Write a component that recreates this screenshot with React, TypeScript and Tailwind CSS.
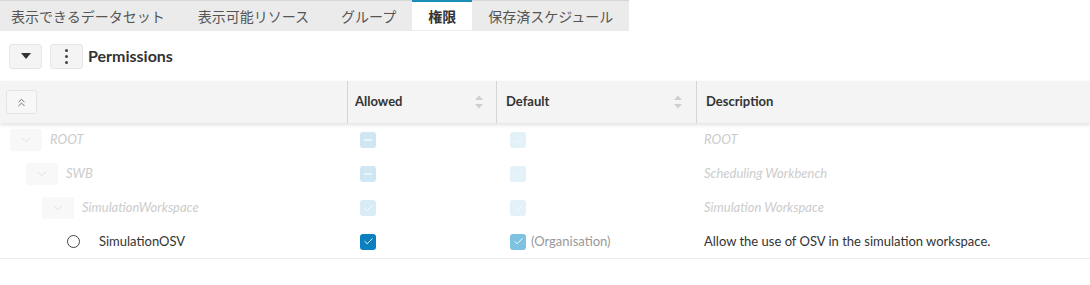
import { ChevronDown, ChevronsUp, Check, Minus } from "lucide-react";

const font = { fontFamily: '"Lato", "Noto Sans CJK JP", sans-serif' };

const tabs = ["表示できるデータセット", "表示可能リソース", "グループ", "権限", "保存済スケジュール"];

function SortArrows() {
  return (
    <svg width="10" height="16" viewBox="0 0 10 16" className="ml-auto">
      <path d="M1 6 L5 1.5 L9 6 Z" fill="#cfcfcf" />
      <path d="M1 10 L5 14.5 L9 10 Z" fill="#cfcfcf" />
    </svg>
  );
}

type BoxKind = "ind-faint" | "chk-faint" | "chk-fainter" | "chk-on" | "chk-mid";

function Box({ kind }: { kind: BoxKind }) {
  const bg = {
    "ind-faint": "bg-[#cfe6f3]",
    "chk-faint": "bg-[#d9ecf6]",
    "chk-fainter": "bg-[#e3f1f8]",
    "chk-on": "bg-[#0b80bf]",
    "chk-mid": "bg-[#7ec2e1]",
  }[kind];
  const fg = kind === "chk-on" || kind === "chk-mid" ? "text-white" : "text-[#f4fafd]";
  return (
    <div className={`w-[16px] h-[16px] rounded-[3px] flex items-center justify-center ${bg} ${fg}`}>
      {kind === "ind-faint" ? (
        <Minus size={12} strokeWidth={3} />
      ) : (
        <Check size={11} strokeWidth={2} />
      )}
    </div>
  );
}

function TreeBtn() {
  return (
    <div className="w-[32px] h-[22px] rounded-[3px] bg-[#f8f8f8] flex items-center justify-center text-[#dcdcdc]">
      <ChevronDown size={14} strokeWidth={1.5} />
    </div>
  );
}

const rows = [
  { level: 0, name: "ROOT", allowed: "ind-faint", def: "chk-fainter", desc: "ROOT", faded: true },
  { level: 1, name: "SWB", allowed: "ind-faint", def: "chk-fainter", desc: "Scheduling Workbench", faded: true },
  { level: 2, name: "SimulationWorkspace", allowed: "chk-faint", def: "chk-fainter", desc: "Simulation Workspace", faded: true },
  {
    level: 3,
    name: "SimulationOSV",
    allowed: "chk-on",
    def: "chk-mid",
    desc: "Allow the use of OSV in the simulation workspace.",
    faded: false,
  },
] as const;

export default function App() {
  return (
    <div className="w-[1090px] h-[285px] bg-white text-[#333]" style={font}>
      <div className="flex w-fit h-[31px] bg-[#ebebeb] border-t border-[#d6d6d6]">
        {tabs.map((t, i) => (
          <div
            key={t}
            className={`h-full shrink-0 whitespace-nowrap flex items-center text-[14px] ${
              i === 0 ? "pl-[11px] pr-[17px]" : "px-4"
            } ${
              i === 3
                ? "bg-white border-t-2 border-[#1b8fb5] -mt-px font-bold text-[#333]"
                : "text-[#555]"
            }`}
            style={{ fontFamily: '"Noto Sans CJK JP", sans-serif' }}
          >
            {t}
          </div>
        ))}
      </div>

      <div className="flex items-center h-[50px] pl-[9px] gap-2">
        <div className="w-[33px] h-[25px] rounded-[3px] bg-[#f4f4f4] border border-[#e6e6e6] flex items-center justify-center">
          <svg width="10" height="6" viewBox="0 0 10 6">
            <path d="M0 0 H10 L5 6 Z" fill="#333" />
          </svg>
        </div>
        <div className="w-[33px] h-[25px] rounded-[3px] bg-[#f4f4f4] border border-[#e6e6e6] flex flex-col items-center justify-center gap-[3px]">
          <div className="w-[3px] h-[3px] rounded-full bg-[#444]" />
          <div className="w-[3px] h-[3px] rounded-full bg-[#444]" />
          <div className="w-[3px] h-[3px] rounded-full bg-[#444]" />
        </div>
        <div className="text-[16px] font-bold text-[#333] -ml-[3px]">Permissions</div>
      </div>

      <div className="flex h-[42px] bg-[#f4f4f4] shadow-[0_2px_4px_rgba(0,0,0,0.12)] relative text-[13px] font-bold text-[#333]">
        <div className="w-[348px] flex items-center pl-[6px] border-r border-[#d4d4d4]">
          <div className="w-[31px] h-[24px] rounded-[3px] border border-[#e4e4e4] bg-[#f7f7f7] flex items-center justify-center text-[#555]">
            <ChevronsUp size={13} strokeWidth={1.5} />
          </div>
        </div>
        <div className="w-[149px] flex items-center pl-[7px] pr-[12px] border-r border-[#d4d4d4]">
          Allowed
          <SortArrows />
        </div>
        <div className="w-[200px] flex items-center pl-[9px] pr-[13px] border-r border-[#d4d4d4]">
          Default
          <SortArrows />
        </div>
        <div className="flex-1 flex items-center pl-[9px]">Description</div>
      </div>

      {rows.map((r) => (
        <div
          key={r.name}
          className={`flex h-[34px] items-center text-[13px] ${r.faded ? "" : "border-b border-[#ececec]"}`}
        >
          {r.faded ? (
            <div className="w-[349px] flex items-center" style={{ paddingLeft: 10 + r.level * 16 }}>
              <TreeBtn />
              <span className="ml-2 italic text-[#cccccc]">{r.name}</span>
            </div>
          ) : (
            <div className="w-[349px] flex items-center pl-[67px]">
              <div className="w-[13px] h-[13px] rounded-full border border-[#444]" />
              <span className="ml-[19px] text-[#333]">{r.name}</span>
            </div>
          )}
          <div className="w-[148px] pl-[11px]">
            <Box kind={r.allowed} />
          </div>
          <div className="w-[200px] pl-[13px] flex items-center gap-[5px]">
            <Box kind={r.def} />
            {!r.faded && <span className="text-[#999]">(Organisation)</span>}
          </div>
          <div className={`flex-1 pl-[7px] ${r.faded ? "italic text-[#cccccc]" : "text-[#333]"}`}>{r.desc}</div>
        </div>
      ))}
    </div>
  );
}
